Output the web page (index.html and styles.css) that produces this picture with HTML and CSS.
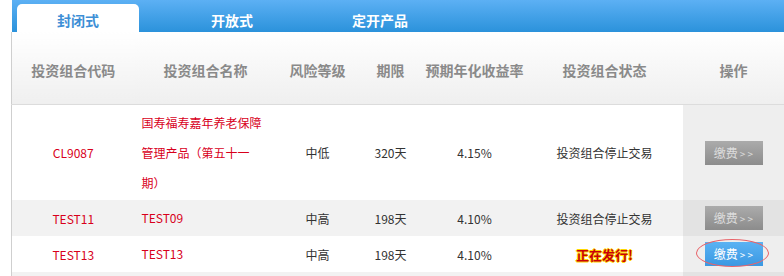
FILE: index.html
```html
<!DOCTYPE html>
<html lang="zh-CN">
<head>
<meta charset="utf-8">
<link rel="stylesheet" href="styles.css">
</head>
<body>
<div class="wrap">
  <div class="tabs">
    <div class="tab tab-1 active">封闭式</div>
    <div class="tab tab-2">开放式</div>
    <div class="tab tab-3">定开产品</div>
  </div>
  <table class="grid">
    <colgroup>
      <col class="c1"><col class="c2"><col class="c3"><col class="c4"><col class="c5"><col class="c6"><col class="c7">
    </colgroup>
    <thead>
      <tr>
        <th>投资组合代码</th>
        <th>投资组合名称</th>
        <th>风险等级</th>
        <th>期限</th>
        <th>预期年化收益率</th>
        <th>投资组合状态</th>
        <th>操作</th>
      </tr>
    </thead>
    <tbody>
      <tr class="r-tall">
        <td class="red">CL9087</td>
        <td class="red name">国寿福寿嘉年养老保障管理产品（第五十一期）</td>
        <td>中低</td>
        <td>320天</td>
        <td>4.15%</td>
        <td>投资组合停止交易</td>
        <td class="op"><span class="btn gray">缴费<small>&gt; &gt;</small></span></td>
      </tr>
      <tr class="alt">
        <td class="red">TEST11</td>
        <td class="red name">TEST09</td>
        <td>中高</td>
        <td>198天</td>
        <td>4.10%</td>
        <td>投资组合停止交易</td>
        <td class="op"><span class="btn gray">缴费<small>&gt; &gt;</small></span></td>
      </tr>
      <tr>
        <td class="red">TEST13</td>
        <td class="red name">TEST13</td>
        <td>中高</td>
        <td>198天</td>
        <td>4.10%</td>
        <td><span class="hot">正在发行!</span></td>
        <td class="op"><span class="btn blue">缴费<small>&gt; &gt;</small><i class="ring"></i></span></td>
      </tr>
      <tr class="alt edge">
        <td></td><td></td><td></td><td></td><td></td><td></td><td class="op"></td>
      </tr>
    </tbody>
  </table>
</div>
</body>
</html>
```

FILE: styles.css
```css
html, body {
  margin: 0;
  padding: 0;
  background: #fff;
  overflow: hidden;
}
body {
  font-family: "Noto Sans CJK SC", "Microsoft YaHei", sans-serif;
  font-size: 12px;
  color: #333;
}
.wrap {
  padding-left: 11px;
  width: 773px;
}
.tabs {
  margin-left: 1px;
  height: 32px;
  background: linear-gradient(#5cb0f4, #2b92db);
  display: flex;
  align-items: flex-end;
}
.tab {
  width: 122px;
  height: 28px;
  line-height: 32px;
  text-align: center;
  font-size: 14px;
  font-weight: bold;
  color: #fff;
  box-sizing: border-box;
}
.tab-1 { margin-left: 5px; }
.tab-2 { margin-left: 32px; }
.tab-3 { margin-left: 26px; }
.tab.active {
  background: #fff;
  color: #3d8fd6;
  border-radius: 5px 5px 0 0;
}
.grid {
  border-collapse: collapse;
  table-layout: fixed;
  width: 773px;
  border-left: 1px solid #cfcfcf;
}
.c1 { width: 123px; }
.c2 { width: 142px; }
.c3 { width: 82px; }
.c4 { width: 64px; }
.c5 { width: 104px; }
.c6 { width: 156px; }
.c7 { width: 102px; }
th {
  height: 68px;
  padding: 4px 0 0;
  font-size: 14px;
  font-weight: bold;
  color: #8a8a8a;
  background: linear-gradient(#ffffff, #efefef);
  border-bottom: 1px solid #dcdcdc;
  text-align: center;
}
td {
  height: 36px;
  padding: 0;
  text-align: center;
  vertical-align: middle;
}
.r-tall td { height: 95px; }
.name {
  text-align: left;
  padding: 0 14px 0 7px;
  line-height: 30px;
}
.red { color: #d8001b; }
.alt td { background: #f2f2f2; }
.op { background: #eeeeee; }
.alt td.op { background: #e3e3e3; }
.btn {
  position: relative;
  display: inline-block;
  width: 58px;
  height: 24px;
  line-height: 24px;
  font-size: 12px;
  text-align: center;
  vertical-align: middle;
}
.btn small {
  font-size: 10px;
  margin-left: 2px;
}
.btn.gray {
  background: linear-gradient(#ababab, #8c8c8c);
  color: #dcdcdc;
}
.btn.blue {
  background: linear-gradient(#5bb2f3, #3a98e2);
  color: #fff;
}
.ring {
  position: absolute;
  left: -9px;
  top: -3px;
  width: 71px;
  height: 26px;
  border: 1px solid #e8646a;
  border-radius: 50%;
}
.hot {
  font-size: 13px;
  font-weight: bold;
  color: #c8000a;
  text-shadow: 1px 0 0 #ffd800, -1px 0 0 #ffd800, 0 1px 0 #ffd800, 0 -1px 0 #ffd800;
}
```
